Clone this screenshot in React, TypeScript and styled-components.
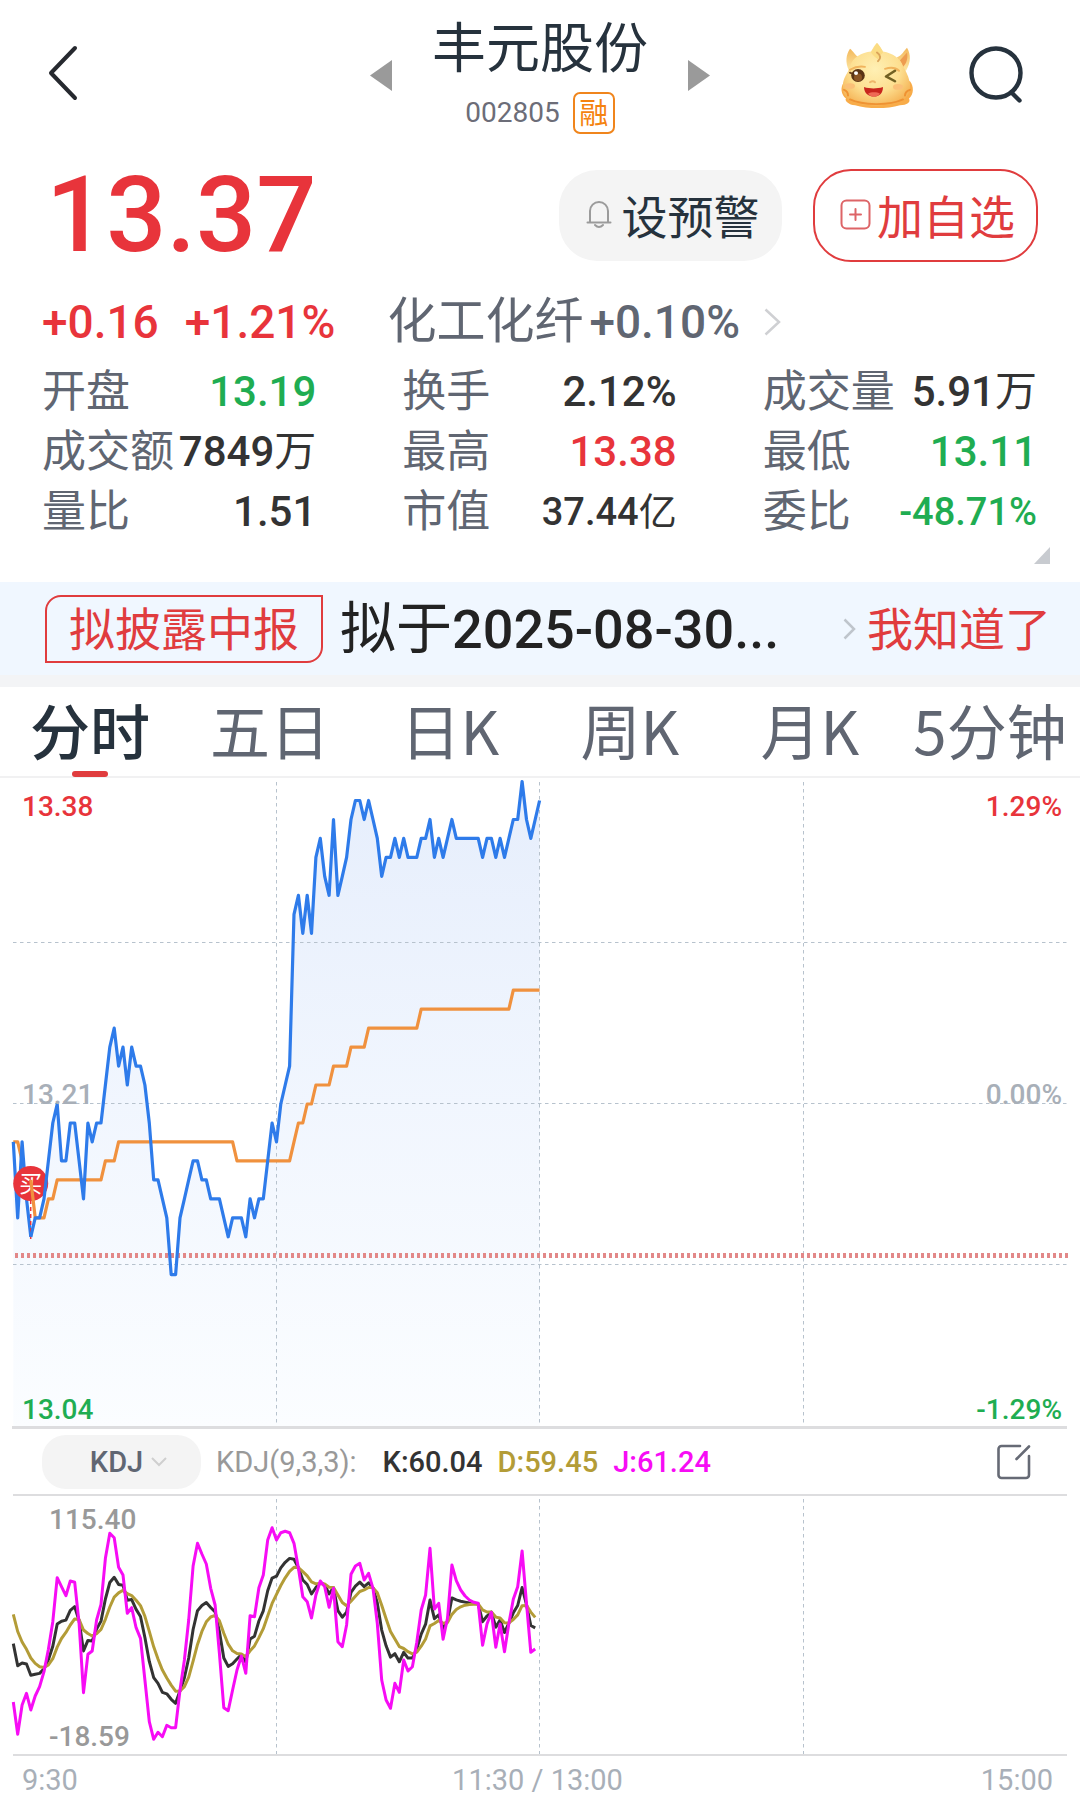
import React from 'react';
import styled, { createGlobalStyle } from 'styled-components';

const color = {
  red: '#e8343b',
  redSoft: '#e03c3e',
  green: '#1fad52',
  ink: '#26323d',
  text: '#333333',
  slate: '#606672',
  grey: '#999999',
  axis: '#a8afb8',
  rule: '#dddddf',
  gold: '#b39c37',
  magenta: '#f70cf5',
  blue: '#2e7bea',
  orange: '#f0913e',
};

const GlobalStyle = createGlobalStyle`
  * { box-sizing: border-box; }
  body {
    margin: 0;
    background: #ffffff;
    font-family: Roboto, "Noto Sans CJK SC", sans-serif;
    color: ${color.text};
  }
  button {
    margin: 0;
    padding: 0;
    border: 0;
    background: none;
    color: inherit;
    font: inherit;
    cursor: pointer;
  }
  svg { display: block; flex: none; }
  h1, p, dl, dt, dd { margin: 0; font-weight: 400; }
`;

const Page = styled.main`
  width: 100%;
  overflow: hidden;
`;

/* ---------- header ---------- */

const Header = styled.header`
  display: grid;
  grid-template-columns: 1fr auto 1fr;
  align-items: center;
  padding: 16px 44px 14px;
`;

const HeaderActions = styled.div`
  display: flex;
  justify-content: flex-end;
  align-items: center;
  gap: 55px;
  padding-right: 11px;
`;

const StockSwitcher = styled.div`
  display: flex;
  align-items: center;
  gap: 40px;
`;

const StockHeading = styled.div`
  display: flex;
  flex-direction: column;
  align-items: center;
  gap: 8px;
`;

const StockName = styled.h1`
  font-size: 54px;
  line-height: 68px;
  color: ${color.ink};
`;

const StockCode = styled.p`
  display: flex;
  align-items: center;
  gap: 13px;
  font-size: 28px;
  line-height: 42px;
  color: #6c6d78;
`;

const MarginBadge = styled.span`
  width: 42px;
  height: 42px;
  border: 2px solid #f0851c;
  border-radius: 7px;
  font-size: 29px;
  line-height: 40px;
  text-align: center;
  color: #f58310;
`;

/* ---------- price ---------- */

const PriceRow = styled.section`
  display: flex;
  align-items: center;
  justify-content: space-between;
  padding: 21px 42px 0 46px;
`;

const Price = styled.strong`
  font-size: 106px;
  line-height: 93px;
  font-weight: 500;
  color: ${color.red};
`;

const PriceActions = styled.div`
  display: flex;
  align-items: center;
  gap: 31px;
`;

const PillButton = styled.button<{ $outlined?: boolean }>`
  display: flex;
  align-items: center;
  justify-content: center;
  gap: ${(p) => (p.$outlined ? 6 : 10)}px;
  width: ${(p) => (p.$outlined ? 225 : 223)}px;
  height: ${(p) => (p.$outlined ? 93 : 91)}px;
  padding: 0 0 3px 4px;
  border: ${(p) => (p.$outlined ? `2px solid ${color.redSoft}` : '0')};
  border-radius: 38px;
  background: ${(p) => (p.$outlined ? '#ffffff' : '#f4f4f4')};
  color: ${(p) => (p.$outlined ? color.redSoft : color.ink)};
  font-size: 46px;
`;

const ChangeRow = styled.section`
  display: flex;
  align-items: center;
  margin-top: 30px;
  padding: 0 42px;
  font-size: 46px;
  line-height: 60px;
  font-weight: 500;
`;

const Change = styled.span`
  margin-right: 26px;
  color: ${color.red};
`;

const SectorLink = styled.a`
  display: flex;
  align-items: center;
  margin-left: 26px;
  color: ${color.slate};
  text-decoration: none;
`;

const SectorName = styled.span`
  margin-right: 6px;
  font-size: 49px;
  font-weight: 400;
`;

const SectorChange = styled.span`
  margin-right: 24px;
`;

/* ---------- stats ---------- */

const Stats = styled.dl`
  display: grid;
  grid-template-columns: repeat(3, 1fr);
  column-gap: 86px;
  margin-top: 10px;
  padding: 0 43px 0 42px;
`;

const Stat = styled.div`
  display: flex;
  justify-content: space-between;
  height: 60px;
  line-height: 60px;
  white-space: nowrap;
`;

const StatLabel = styled.dt`
  font-size: 44px;
  color: ${color.slate};
`;

const StatValue = styled.dd<{ $tone: string; $size: number }>`
  font-size: ${(p) => p.$size}px;
  font-weight: 500;
  color: ${(p) => p.$tone};
`;

const Unit = styled.span`
  font-weight: 400;
`;

const ExpandRow = styled.div`
  display: flex;
  justify-content: flex-end;
  height: 40px;
  padding: 5px 30px 0 0;
`;

const ExpandButton = styled.button`
  width: 16px;
  height: 17px;
`;

/* ---------- notice ---------- */

const Notice = styled.section`
  display: flex;
  align-items: center;
  height: 105px;
  padding: 0 29px 0 45px;
  border-bottom: 12px solid #f3f4f6;
  background: #f0f7ff;
`;

const NoticeTag = styled.span`
  padding: 2px 22px 0;
  border: 2px solid ${color.redSoft};
  border-radius: 16px 0;
  font-size: 46px;
  line-height: 62px;
  color: ${color.redSoft};
`;

const NoticeText = styled.p`
  flex: 1;
  padding: 2px 0 0 17px;
  font-size: 56px;
  line-height: 68px;
  color: #222222;
  white-space: nowrap;
`;

const NoticeDate = styled.span`
  font-size: 54px;
  font-weight: 500;
`;

const NoticeButton = styled.button`
  margin-left: 11px;
  padding-top: 2px;
  font-size: 46px;
  line-height: 62px;
  color: ${color.redSoft};
`;

/* ---------- tabs ---------- */

const Tabs = styled.nav`
  display: grid;
  grid-template-columns: repeat(6, 1fr);
  height: 91px;
  border-bottom: 2px solid #f1f1f2;
`;

const Tab = styled.button<{ $active?: boolean }>`
  display: flex;
  flex-direction: column;
  align-items: center;
  font-family: "Noto Sans CJK SC", sans-serif;
  font-size: 60px;
  line-height: 84px;
  font-weight: ${(p) => (p.$active ? 500 : 400)};
  color: ${(p) => (p.$active ? color.ink : color.slate)};
  white-space: nowrap;

  &::after {
    content: '';
    flex: none;
    width: 36px;
    height: 6px;
    border-radius: 3px;
    background: ${(p) => (p.$active ? color.redSoft : 'transparent')};
  }
`;

/* ---------- charts ---------- */

const ChartBox = styled.section`
  position: relative;
`;

const ChartSvg = styled.svg`
  width: 100%;
  height: auto;
`;

const PriceLabels = styled.div`
  position: absolute;
  inset: 12px 18px 3px 22px;
  display: flex;
  flex-direction: column;
  justify-content: space-between;
`;

const KdjLabels = styled(PriceLabels)`
  inset: 9px auto 3px 49px;
`;

const LabelRow = styled.div<{ $tone: string }>`
  display: flex;
  justify-content: space-between;
  font-size: 28px;
  line-height: 33px;
  font-weight: 500;
  color: ${(p) => p.$tone};
`;

const MiddleLabelRow = styled(LabelRow)`
  margin-bottom: 28px;
`;

const IndicatorBar = styled.section`
  display: flex;
  align-items: center;
  height: 65px;
  padding: 0 49px 0 42px;
  font-size: 29px;
  line-height: 34px;
  font-weight: 500;
`;

const IndicatorButton = styled.button`
  display: flex;
  align-items: center;
  justify-content: center;
  gap: 8px;
  width: 159px;
  height: 54px;
  padding-left: 14px;
  border-radius: 24px;
  background: #f4f4f4;
  color: ${color.slate};
`;

const IndicatorName = styled.span`
  margin: 0 26px 0 15px;
  font-weight: 400;
  color: ${color.grey};
`;

const IndicatorValue = styled.span<{ $tone: string }>`
  margin-right: 15px;
  color: ${(p) => p.$tone};
`;

const EditButton = styled.button`
  margin-left: auto;
`;

const TimeAxis = styled.footer`
  display: grid;
  grid-template-columns: 1fr auto 1fr;
  height: 41px;
  padding: 7px 27px 0 22px;
  font-size: 29px;
  line-height: 34px;
  color: ${color.axis};

  & > :last-child { text-align: right; }
`;

/* ---------- data ---------- */

const stats = [
  { label: '开盘', value: '13.19', tone: color.green, size: 42 },
  { label: '换手', value: '2.12%', tone: color.text, size: 42 },
  { label: '成交量', value: '5.91', unit: '万', tone: color.text, size: 42 },
  { label: '成交额', value: '7849', unit: '万', tone: color.text, size: 42 },
  { label: '最高', value: '13.38', tone: color.red, size: 42 },
  { label: '最低', value: '13.11', tone: color.green, size: 42 },
  { label: '量比', value: '1.51', tone: color.text, size: 42 },
  { label: '市值', value: '37.44', unit: '亿', tone: color.text, size: 38 },
  { label: '委比', value: '-48.71%', tone: color.green, size: 38 },
];

const tabs = ['分时', '五日', '日K', '周K', '月K', '5分钟'];

// Minute prices, in cents above or below yesterday's close of 13.21.
const priceTicks = [
  -2, -6, -2, -5, -7, -6, -6, -5, -3, -1, 0, -3, -3, -1, -1, -3, -5, -1, -2, -1,
  -1, 1, 3, 4, 2, 3, 1, 3, 2, 2, 1, -1, -4, -4, -5, -6, -9, -9, -6, -5,
  -4, -3, -3, -4, -4, -5, -5, -5, -6, -7, -6, -6, -6, -7, -5, -6, -5, -5, -3, -1,
  -2, 0, 1, 2, 10, 11, 9, 11, 9, 13, 14, 12, 11, 15, 11, 12, 13, 15, 16, 16,
  15, 16, 15, 14, 12, 13, 13, 14, 13, 14, 13, 13, 13, 14, 14, 15, 13, 14, 13, 14,
  15, 14, 14, 14, 14, 14, 14, 13, 14, 14, 13, 14, 13, 14, 15, 15, 17, 15, 14, 15,
  16,
];

// Average price: [last minute of the step, cents].
const averageSteps: [number, number][] = [
  [1, -2], [2, -3], [4, -4], [7, -6], [9, -5], [20, -4], [23, -3], [50, -2],
  [63, -3], [64, -2], [66, -1], [68, 0], [72, 1], [76, 2], [80, 3], [92, 4],
  [113, 5], [120, 6],
];

// J line, as depth below the top of the indicator plot, three units to a pixel.
const jDepth = [
  636, 733, 645, 610, 660, 618, 590, 545, 478, 395, 263, 290, 317, 273, 277, 400, 608, 493, 483, 390,
  343, 205, 130, 143, 232, 255, 370, 353, 413, 445, 570, 695, 748, 727, 740, 706, 713, 713, 600, 510,
  390, 228, 160, 192, 222, 295, 345, 490, 653, 662, 600, 540, 498, 550, 377, 380, 293, 255, 150, 113,
  150, 128, 124, 128, 160, 235, 320, 335, 384, 315, 273, 290, 352, 295, 455, 470, 405, 253, 228, 220,
  270, 250, 295, 400, 570, 630, 655, 580, 607, 510, 543, 530, 457, 360, 315, 175, 357, 340, 448, 385,
  225, 272, 300, 318, 330, 337, 340, 466, 402, 367, 472, 402, 485, 400, 328, 290, 183, 340, 487, 477,
];

const minuteX = (m: number) => 13.3 + m * 4.386;
const tickY = (t: number) => 326 - t * 18.97;

type Point = [number, number];
const toPoints = (pts: Point[]) => pts.map(([x, y]) => `${x.toFixed(1)},${y.toFixed(1)}`).join(' ');

const pricePoints: Point[] = priceTicks.map((t, m) => [minuteX(m), tickY(t)]);
const averagePoints: Point[] = priceTicks.map((_, m) => {
  const step = averageSteps.find(([last]) => m <= last)!;
  return [minuteX(m), tickY(step[1])];
});

// With 3-period smoothing and J = 3K - 2D, each D follows from the D before it and J.
const dDepth: number[] = [];
jDepth.forEach((j, m) => dDepth.push(m === 0 ? 373 : (6 * dDepth[m - 1] + j) / 7));
const kDepth = jDepth.map((j, m) => (j + 2 * dDepth[m]) / 3);
const kdjPoints = (series: number[]) =>
  toPoints(series.map((v, m): Point => [minuteX(m), v / 3 - 4]));

/* ---------- icons ---------- */

const BackIcon = () => (
  <svg width="40" height="56" viewBox="0 0 40 56" fill="none" stroke="#26292f" strokeWidth="4" strokeLinecap="round" strokeLinejoin="round">
    <path d="M31 3 7 28l24 25" />
  </svg>
);

const ArrowIcon = ({ right }: { right?: boolean }) => (
  <svg width="22" height="31" viewBox="0 0 22 31" fill="#9a9a9a">
    <path d={right ? 'M0 0v31l22-15.500z' : 'M22 0v31L0 15.500z'} />
  </svg>
);

const SearchIcon = () => (
  <svg width="56" height="58" viewBox="0 0 56 58" fill="none" stroke="#26323d" strokeWidth="4.400" strokeLinecap="round">
    <circle cx="27" cy="27" r="24.500" />
    <path d="m43 47 7.500 7.500" />
  </svg>
);

const DragonIcon = () => (
  <svg width="74" height="67" viewBox="0 0 74 70" preserveAspectRatio="none">
    <defs>
      <radialGradient id="face" cx="0.48" cy="0.42" r="0.62">
        <stop offset="0" stopColor="#fff0b4" />
        <stop offset="0.6" stopColor="#fddf90" />
        <stop offset="1" stopColor="#f5b457" />
      </radialGradient>
      <linearGradient id="horn" x1="0" y1="0" x2="0" y2="1">
        <stop offset="0" stopColor="#f3b85c" />
        <stop offset="1" stopColor="#fde6a2" />
      </linearGradient>
    </defs>
    <path d="M9 30C5 21 6 13 10 7c3 2 5 7 9 9l-3 13z" fill="url(#horn)" />
    <path d="M66 30c5-9 5-17 1-24-3 3-5 8-10 10l3 13z" fill="url(#horn)" />
    <path d="M67 11c1 5 0 11-4 15l-3-7z" fill="#ee9c50" />
    <path d="M4 42c-4 5-3 13 2 17-2 2 3 7 9 7 13 4 32 4 45 0 7 0 11-3 9-7 5-4 5-13 1-18z" fill="#f8ac49" />
    <path d="M10 26C12 16 22 11 31 10c2-4 4-7 6-9 2 2 4 5 6 9 10 2 17 7 20 15 3 6 6 11 7 19 1 10-5 18-15 20-11 3-27 3-37 0C7 62 1 54 3 43c1-7 5-11 7-17z" fill="url(#face)" />
    <path d="M31 11c2-4 4-7 6-10 2 3 5 6 6 10-2 2-4 4-5 7-3-2-5-4-7-7z" fill="#fbdc83" />
    <path d="M37 11c4 3 4 6 1 9" fill="none" stroke="#dba45a" strokeWidth="2" strokeLinecap="round" />
    <path d="M10 29c5-3 10-4 15-3M45 28c6-2 11-1 14 2" fill="none" stroke="#f1b45d" strokeWidth="2" strokeLinecap="round" />
    <path d="m10 32 6 3" stroke="#6c421f" strokeWidth="2" strokeLinecap="round" />
    <circle cx="18" cy="35" r="6.800" fill="#593315" />
    <circle cx="18" cy="37" r="4" fill="#8a5425" />
    <circle cx="16" cy="32.500" r="2" fill="#ffffff" />
    <path d="m55 30-9 6 9 5" fill="none" stroke="#716022" strokeWidth="2.600" strokeLinecap="round" strokeLinejoin="round" />
    <path d="M30 42q3-2 5 0" fill="none" stroke="#eeb76b" strokeWidth="2" strokeLinecap="round" />
    <ellipse cx="10" cy="46" rx="5" ry="3" fill="#fbc078" />
    <ellipse cx="58" cy="47" rx="5" ry="3" fill="#fbc078" />
    <path d="M24 47c6 2 13 2 19 0 0 7-4 10-9 10s-10-3-10-10z" fill="#c8261d" />
    <path d="M28 54c3-2 9-2 12 0-3 4-9 4-12 0z" fill="#ef6a55" />
    <path d="M4 50c3 1 4 3 4 6M70 50c-3 1-5 3-5 6M10 60c12 6 39 7 53 0" fill="none" stroke="#ef9232" strokeWidth="2" strokeLinecap="round" />
  </svg>
);

const BellIcon = () => (
  <svg width="26" height="30" viewBox="0 0 26 30" fill="none" stroke="#9b9b9b" strokeWidth="2" strokeLinecap="round" strokeLinejoin="round">
    <path d="M4 23V12a9 9 0 0 1 18 0v11M1.500 23.500h23M9 26q4 4 8 0" />
  </svg>
);

const AddIcon = () => (
  <svg width="31" height="31" viewBox="0 0 31 31" fill="none" stroke="#dd6467" strokeWidth="2" strokeLinecap="round">
    <rect x="1.500" y="1.500" width="28" height="28" rx="5" />
    <path d="M15.500 10v11M10 15.500h11" />
  </svg>
);

const ChevronRight = ({ w, h, tone }: { w: number; h: number; tone: string }) => (
  <svg width={w} height={h} viewBox={`0 0 ${w} ${h}`} fill="none" stroke={tone} strokeWidth="2.500">
    <path d={`M1.500 1.500 ${w - 2} ${h / 2} 1.500 ${h - 1.5}`} />
  </svg>
);

const ChevronDown = () => (
  <svg width="16" height="10" viewBox="0 0 16 10" fill="none" stroke="#cfcfcf" strokeWidth="2">
    <path d="m1 1 7 7 7-7" />
  </svg>
);

const EditIcon = () => (
  <svg width="34" height="36" viewBox="0 0 34 36" fill="none" stroke="#666a75" strokeWidth="2.600" strokeLinecap="round" strokeLinejoin="round">
    <path d="M23 2H4.500a3 3 0 0 0-3 3v26a3 3 0 0 0 3 3H29a3 3 0 0 0 3-3V12M19.500 15 32 2.500" />
  </svg>
);

/* ---------- chart drawings ---------- */

const GRID_X = [276.5, 539.5, 803.5];
const grid = { stroke: '#b7c2cd', strokeWidth: 1, strokeDasharray: '3.500 3.500' };

const PriceChart = () => {
  const line = { fill: 'none', strokeWidth: 3.2, strokeLinejoin: 'round' as const };
  const area = toPoints([[13.3, 649], ...pricePoints, [539.6, 649]]);
  return (
    <ChartSvg viewBox="0 0 1080 651" role="img" aria-label="分时走势">
      <defs>
        <linearGradient id="area" gradientUnits="userSpaceOnUse" x1="0" y1="4" x2="0" y2="649">
          <stop offset="0" stopColor="#e6eefc" />
          <stop offset="0.5" stopColor="#f1f6fe" />
          <stop offset="1" stopColor="#fbfdff" />
        </linearGradient>
      </defs>
      <polygon points={area} fill="url(#area)" />
      <g {...grid}>
        {[164.5, 325.5, 486.5].map((y) => <line key={y} x1="13" y1={y} x2="1067" y2={y} />)}
        {GRID_X.map((x) => <line key={x} x1={x} y1="4" x2={x} y2="648" />)}
      </g>
      <line x1="15" y1="477.500" x2="1068" y2="477.500" stroke="#e28888" strokeWidth="5" strokeDasharray="3 3" />
      <polyline {...line} stroke={color.orange} points={toPoints(averagePoints.slice(0, 5))} />
      <polyline {...line} stroke={color.blue} points={toPoints(pricePoints.slice(0, 5))} />
      <line x1="30.700" y1="422" x2="30.700" y2="462" stroke={color.red} strokeWidth="1.500" strokeDasharray="4 3" />
      <circle cx="30.700" cy="405.500" r="17.500" fill={color.red} />
      <text x="30.700" y="414" textAnchor="middle" fontSize="23" fill="#ffffff">买</text>
      <polyline {...line} stroke={color.orange} points={toPoints(averagePoints.slice(4))} />
      <polyline {...line} stroke={color.blue} points={toPoints(pricePoints.slice(4))} />
      <line x1="12" y1="649.500" x2="1067" y2="649.500" stroke={color.rule} strokeWidth="3" />
    </ChartSvg>
  );
};

const KdjChart = () => {
  const line = { fill: 'none', strokeWidth: 3, strokeLinejoin: 'round' as const };
  return (
    <ChartSvg viewBox="0 0 1080 262" role="img" aria-label="KDJ">
      <g stroke={color.rule} strokeWidth="2">
        <line x1="13" y1="1" x2="1067" y2="1" />
        <line x1="13" y1="261" x2="1067" y2="261" />
      </g>
      <g {...grid}>
        {GRID_X.map((x) => <line key={x} x1={x} y1="5" x2={x} y2="260" />)}
      </g>
      <polyline {...line} stroke="#333333" points={kdjPoints(kDepth)} />
      <polyline {...line} stroke={color.gold} points={kdjPoints(dDepth)} />
      <polyline {...line} stroke={color.magenta} points={kdjPoints(jDepth)} />
    </ChartSvg>
  );
};

/* ---------- page ---------- */

export default function App() {
  return (
    <>
      <GlobalStyle />
      <Page>
        <Header>
          <div>
            <button aria-label="返回"><BackIcon /></button>
          </div>
          <StockSwitcher>
            <button aria-label="上一只"><ArrowIcon /></button>
            <StockHeading>
              <StockName>丰元股份</StockName>
              <StockCode>002805<MarginBadge>融</MarginBadge></StockCode>
            </StockHeading>
            <button aria-label="下一只"><ArrowIcon right /></button>
          </StockSwitcher>
          <HeaderActions>
            <button aria-label="助手"><DragonIcon /></button>
            <button aria-label="搜索"><SearchIcon /></button>
          </HeaderActions>
        </Header>

        <PriceRow>
          <Price>13.37</Price>
          <PriceActions>
            <PillButton><BellIcon />设预警</PillButton>
            <PillButton $outlined><AddIcon />加自选</PillButton>
          </PriceActions>
        </PriceRow>

        <ChangeRow>
          <Change>+0.16</Change>
          <Change>+1.21%</Change>
          <SectorLink href="#sector">
            <SectorName>化工化纤</SectorName>
            <SectorChange>+0.10%</SectorChange>
            <ChevronRight w={17} h={28} tone="#cfd0d3" />
          </SectorLink>
        </ChangeRow>

        <Stats>
          {stats.map((s) => (
            <Stat key={s.label}>
              <StatLabel>{s.label}</StatLabel>
              <StatValue $tone={s.tone} $size={s.size}>
                {s.value}{s.unit && <Unit>{s.unit}</Unit>}
              </StatValue>
            </Stat>
          ))}
        </Stats>
        <ExpandRow>
          <ExpandButton aria-label="展开">
            <svg width="16" height="17" viewBox="0 0 16 17" fill="#c8cbd0"><path d="M16 0v17H0z" /></svg>
          </ExpandButton>
        </ExpandRow>

        <Notice>
          <NoticeTag>拟披露中报</NoticeTag>
          <NoticeText>拟于<NoticeDate>2025-08-30...</NoticeDate></NoticeText>
          <ChevronRight w={13} h={22} tone="#bfc5cc" />
          <NoticeButton>我知道了</NoticeButton>
        </Notice>

        <Tabs>
          {tabs.map((t, i) => <Tab key={t} $active={i === 0}>{t}</Tab>)}
        </Tabs>

        <ChartBox>
          <PriceChart />
          <PriceLabels>
            <LabelRow $tone={color.red}><span>13.38</span><span>1.29%</span></LabelRow>
            <MiddleLabelRow $tone={color.axis}><span>13.21</span><span>0.00%</span></MiddleLabelRow>
            <LabelRow $tone={color.green}><span>13.04</span><span>-1.29%</span></LabelRow>
          </PriceLabels>
        </ChartBox>

        <IndicatorBar>
          <IndicatorButton>KDJ<ChevronDown /></IndicatorButton>
          <IndicatorName>KDJ(9,3,3):</IndicatorName>
          <IndicatorValue $tone={color.text}>K:60.04</IndicatorValue>
          <IndicatorValue $tone={color.gold}>D:59.45</IndicatorValue>
          <IndicatorValue $tone={color.magenta}>J:61.24</IndicatorValue>
          <EditButton aria-label="编辑指标"><EditIcon /></EditButton>
        </IndicatorBar>

        <ChartBox>
          <KdjChart />
          <KdjLabels>
            <LabelRow $tone={color.grey}>115.40</LabelRow>
            <LabelRow $tone={color.grey}>-18.59</LabelRow>
          </KdjLabels>
        </ChartBox>

        <TimeAxis>
          <span>9:30</span>
          <span>11:30 / 13:00</span>
          <span>15:00</span>
        </TimeAxis>
      </Page>
    </>
  );
}
